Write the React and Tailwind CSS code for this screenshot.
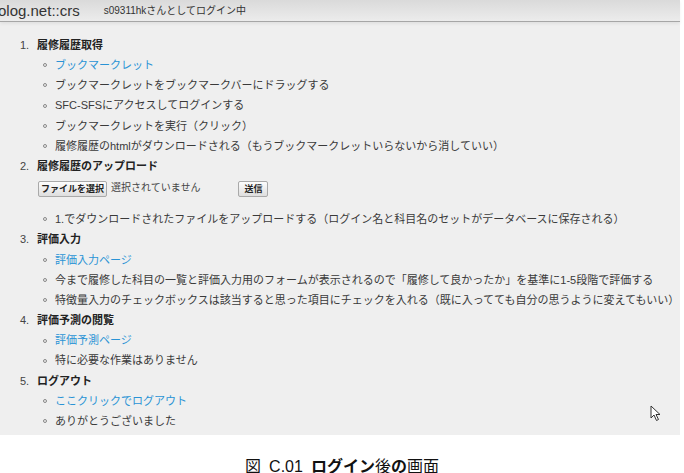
import React from 'react';

const FONT = { fontFamily: '"Liberation Sans", "Noto Sans CJK JP", sans-serif' };

const sections = [
  {
    n: '1.',
    title: '履修履歴取得',
    items: [
      { text: 'ブックマークレット', link: true },
      { text: 'ブックマークレットをブックマークバーにドラッグする' },
      { text: 'SFC-SFSにアクセスしてログインする' },
      { text: 'ブックマークレットを実行（クリック）' },
      { text: '履修履歴のhtmlがダウンロードされる（もうブックマークレットいらないから消していい）' },
    ],
  },
  {
    n: '2.',
    title: '履修履歴のアップロード',
    form: true,
    items: [
      { text: '1.でダウンロードされたファイルをアップロードする（ログイン名と科目名のセットがデータベースに保存される）' },
    ],
  },
  {
    n: '3.',
    title: '評価入力',
    items: [
      { text: '評価入力ページ', link: true },
      { text: '今まで履修した科目の一覧と評価入力用のフォームが表示されるので「履修して良かったか」を基準に1-5段階で評価する' },
      { text: '特徴量入力のチェックボックスは該当すると思った項目にチェックを入れる（既に入ってても自分の思うように変えてもいい）' },
    ],
  },
  {
    n: '4.',
    title: '評価予測の閲覧',
    items: [
      { text: '評価予測ページ', link: true },
      { text: '特に必要な作業はありません' },
    ],
  },
  {
    n: '5.',
    title: 'ログアウト',
    items: [
      { text: 'ここクリックでログアウト', link: true },
      { text: 'ありがとうございました' },
    ],
  },
];

const Button = ({ children, className = '' }) => (
  <span
    className={`inline-flex h-[16px] items-center justify-center whitespace-nowrap rounded-[2px] border border-[#a9a9a9] bg-linear-to-b from-[#fdfdfd] to-[#dedede] text-[9px] leading-none text-[#222] ${className}`}
  >
    {children}
  </span>
);

const App = () => {
  return (
    <div className="relative h-[473px] w-[684px] overflow-hidden bg-white" style={FONT}>
      <div className="h-[435px] w-[680px] bg-[#efefef]">
        {/* header */}
        <div className="flex h-[22px] items-center border-b border-[#a6a6a6] bg-linear-to-b from-[#dadada] to-[#ececec] shadow-[0_2px_3px_rgba(0,0,0,0.06)]">
          <span className="ml-[-2px] text-[15px] leading-none text-[#333]">olog.net::crs</span>
          <span className="ml-[24px] text-[10px] leading-none text-[#333]">s09311hkさんとしてログイン中</span>
        </div>

        <ol className="pt-[13px] text-[11px] text-[#3a3a3a]">
          {sections.map((s) => (
            <li key={s.n}>
              <div className="flex h-[20.2px] items-center">
                <span className="w-[37px] pl-[20px] text-[#444]">{s.n}</span>
                <span className="font-bold text-[#222]">{s.title}</span>
              </div>
              {s.form && (
                <div className="flex h-[33px] items-start pl-[38px] pt-[5px]">
                  <Button className="w-[69px] font-bold">ファイルを選択</Button>
                  <span className="ml-[4px] mt-[-1px] text-[10px] text-[#444]">選択されていません</span>
                  <Button className="ml-[38px] w-[30px] font-bold">送信</Button>
                </div>
              )}
              <ul>
                {s.items.map((it, i) => (
                  <li key={i} className="flex h-[20.2px] items-center">
                    <span className="ml-[43px] mr-[8px] h-[4px] w-[4px] rounded-full border border-[#888]" />
                    <span className={it.link ? 'text-[#2a93d5]' : ''}>{it.text}</span>
                  </li>
                ))}
              </ul>
            </li>
          ))}
        </ol>
      </div>

      {/* caption */}
      <div className="mt-[24px] flex justify-center gap-[8px] text-[16px] leading-none text-[#111]">
        <span>図</span>
        <span>C.01</span>
        <span>
          <span className="font-bold">ログイン</span>
          <span>後</span>
          <span className="font-bold">の</span>
          <span>画面</span>
        </span>
      </div>

      {/* mouse cursor */}
      <svg className="absolute left-[650px] top-[405px]" width="12" height="17" viewBox="0 0 12 17">
        <path d="M1 1 L1 13 L4 10 L6.5 15.5 L8.5 14.5 L6 9.5 L10 9.5 Z" fill="#fff" stroke="#333" strokeWidth="1" />
      </svg>
    </div>
  );
};

export default App;
